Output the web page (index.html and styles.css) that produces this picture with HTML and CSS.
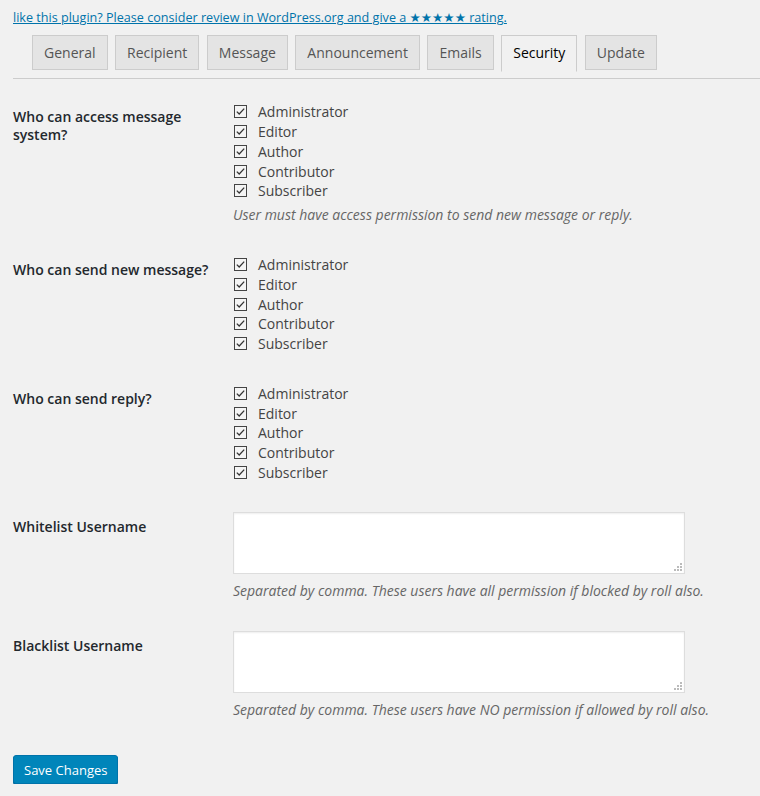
FILE: index.html
```html
<!DOCTYPE html>
<html>
<head>
<meta charset="utf-8">
<link rel="stylesheet" href="styles.css">
</head>
<body>
<div class="wrap">
  <p class="review"><a href="#">like this plugin? Please consider review in WordPress.org and give a ★★★★★ rating.</a></p>
  <div class="tabs">
    <a class="tab" href="#">General</a>
    <a class="tab" href="#">Recipient</a>
    <a class="tab" href="#">Message</a>
    <a class="tab" href="#">Announcement</a>
    <a class="tab" href="#">Emails</a>
    <a class="tab active" href="#">Security</a>
    <a class="tab" href="#">Update</a>
  </div>
  <table class="form-table">
    <tr>
      <th>Who can access message system?</th>
      <td>
        <div class="checks">
          <label class="check"><svg class="cb" width="13" height="13" viewBox="0 0 13 13"><rect x="0.5" y="0.5" width="12" height="12"/><path d="M2.8 6.6 L5.2 9 L10.2 3.6"/></svg>Administrator</label>
          <label class="check"><svg class="cb" width="13" height="13" viewBox="0 0 13 13"><rect x="0.5" y="0.5" width="12" height="12"/><path d="M2.8 6.6 L5.2 9 L10.2 3.6"/></svg>Editor</label>
          <label class="check"><svg class="cb" width="13" height="13" viewBox="0 0 13 13"><rect x="0.5" y="0.5" width="12" height="12"/><path d="M2.8 6.6 L5.2 9 L10.2 3.6"/></svg>Author</label>
          <label class="check"><svg class="cb" width="13" height="13" viewBox="0 0 13 13"><rect x="0.5" y="0.5" width="12" height="12"/><path d="M2.8 6.6 L5.2 9 L10.2 3.6"/></svg>Contributor</label>
          <label class="check"><svg class="cb" width="13" height="13" viewBox="0 0 13 13"><rect x="0.5" y="0.5" width="12" height="12"/><path d="M2.8 6.6 L5.2 9 L10.2 3.6"/></svg>Subscriber</label>
        </div>
        <p class="description">User must have access permission to send new message or reply.</p>
      </td>
    </tr>
    <tr>
      <th>Who can send new message?</th>
      <td>
        <div class="checks">
          <label class="check"><svg class="cb" width="13" height="13" viewBox="0 0 13 13"><rect x="0.5" y="0.5" width="12" height="12"/><path d="M2.8 6.6 L5.2 9 L10.2 3.6"/></svg>Administrator</label>
          <label class="check"><svg class="cb" width="13" height="13" viewBox="0 0 13 13"><rect x="0.5" y="0.5" width="12" height="12"/><path d="M2.8 6.6 L5.2 9 L10.2 3.6"/></svg>Editor</label>
          <label class="check"><svg class="cb" width="13" height="13" viewBox="0 0 13 13"><rect x="0.5" y="0.5" width="12" height="12"/><path d="M2.8 6.6 L5.2 9 L10.2 3.6"/></svg>Author</label>
          <label class="check"><svg class="cb" width="13" height="13" viewBox="0 0 13 13"><rect x="0.5" y="0.5" width="12" height="12"/><path d="M2.8 6.6 L5.2 9 L10.2 3.6"/></svg>Contributor</label>
          <label class="check"><svg class="cb" width="13" height="13" viewBox="0 0 13 13"><rect x="0.5" y="0.5" width="12" height="12"/><path d="M2.8 6.6 L5.2 9 L10.2 3.6"/></svg>Subscriber</label>
        </div>
      </td>
    </tr>
    <tr>
      <th>Who can send reply?</th>
      <td>
        <div class="checks">
          <label class="check"><svg class="cb" width="13" height="13" viewBox="0 0 13 13"><rect x="0.5" y="0.5" width="12" height="12"/><path d="M2.8 6.6 L5.2 9 L10.2 3.6"/></svg>Administrator</label>
          <label class="check"><svg class="cb" width="13" height="13" viewBox="0 0 13 13"><rect x="0.5" y="0.5" width="12" height="12"/><path d="M2.8 6.6 L5.2 9 L10.2 3.6"/></svg>Editor</label>
          <label class="check"><svg class="cb" width="13" height="13" viewBox="0 0 13 13"><rect x="0.5" y="0.5" width="12" height="12"/><path d="M2.8 6.6 L5.2 9 L10.2 3.6"/></svg>Author</label>
          <label class="check"><svg class="cb" width="13" height="13" viewBox="0 0 13 13"><rect x="0.5" y="0.5" width="12" height="12"/><path d="M2.8 6.6 L5.2 9 L10.2 3.6"/></svg>Contributor</label>
          <label class="check"><svg class="cb" width="13" height="13" viewBox="0 0 13 13"><rect x="0.5" y="0.5" width="12" height="12"/><path d="M2.8 6.6 L5.2 9 L10.2 3.6"/></svg>Subscriber</label>
        </div>
      </td>
    </tr>
    <tr>
      <th>Whitelist Username</th>
      <td>
        <div class="ta-wrap">
          <textarea class="ta"></textarea>
          <svg class="grip" width="8" height="8" viewBox="0 0 8 8"><rect x="6" y="0" width="2" height="2"/><rect x="3" y="3" width="2" height="2"/><rect x="6" y="3" width="2" height="2"/><rect x="0" y="6" width="2" height="2"/><rect x="3" y="6" width="2" height="2"/><rect x="6" y="6" width="2" height="2"/></svg>
        </div>
        <p class="description">Separated by comma. These users have all permission if blocked by roll also.</p>
      </td>
    </tr>
    <tr>
      <th>Blacklist Username</th>
      <td>
        <div class="ta-wrap">
          <textarea class="ta"></textarea>
          <svg class="grip" width="8" height="8" viewBox="0 0 8 8"><rect x="6" y="0" width="2" height="2"/><rect x="3" y="3" width="2" height="2"/><rect x="6" y="3" width="2" height="2"/><rect x="0" y="6" width="2" height="2"/><rect x="3" y="6" width="2" height="2"/><rect x="6" y="6" width="2" height="2"/></svg>
        </div>
        <p class="description">Separated by comma. These users have NO permission if allowed by roll also.</p>
      </td>
    </tr>
  </table>
  <p class="submit"><button class="button-primary" type="button">Save Changes</button></p>
</div>
</body>
</html>
```

FILE: styles.css
```css
html, body {
  margin: 0;
  padding: 0;
  background: #f1f1f1;
}
body {
  font-family: "Open Sans", "Noto Sans", "DejaVu Sans", sans-serif;
  color: #23282d;
  font-size: 13px;
}
.wrap {
  padding-left: 13px;
}
.review {
  margin: 0;
  padding-top: 9px;
  line-height: 18px;
  font-size: 12.6px;
}
.review a {
  color: #0073aa;
  text-decoration: underline;
}
.tabs {
  display: flex;
  padding: 8px 0 0 12px;
  border-bottom: 1px solid #ccc;
  height: 52px;
  box-sizing: border-box;
}
.tab {
  display: block;
  margin-left: 7.5px;
  height: 35px;
  box-sizing: border-box;
  padding: 0 11px;
  line-height: 33px;
  font-size: 14px;
  color: #555;
  background: #e4e4e4;
  border: 1px solid #ccc;
  text-decoration: none;
}
.tab:first-child {
  margin-left: 7px;
}
.tab.active {
  background: #f1f1f1;
  color: #000;
  height: 37px;
  border-bottom-color: #f1f1f1;
}
.form-table {
  border-collapse: collapse;
  margin-top: 8px;
}
.form-table th {
  width: 210px;
  padding: 21px 10px 20px 0;
  text-align: left;
  vertical-align: top;
  font-weight: 600;
  font-size: 14px;
  line-height: 18px;
  color: #23282d;
}
.form-table td {
  padding: 15px 10px 15px 0;
  vertical-align: top;
}
.checks {
  display: flex;
  flex-direction: column;
}
.check {
  display: flex;
  align-items: center;
  height: 19.75px;
  font-size: 14px;
  color: #444;
}
.cb {
  margin: 0 11px 0 1px;
  flex: none;
}
.cb rect {
  fill: #f4f4f4;
  stroke: #444;
  stroke-width: 1;
}
.cb path {
  fill: none;
  stroke: #333;
  stroke-width: 1.3;
}
.description {
  margin: 4px 0 0;
  font-size: 14px;
  line-height: 20px;
  font-style: italic;
  color: #666;
}
.ta-wrap {
  position: relative;
  width: 452px;
  height: 62px;
}
.ta {
  display: block;
  width: 452px;
  height: 62px;
  box-sizing: border-box;
  margin: 0;
  border: 1px solid #ddd;
  background: #fff;
  box-shadow: inset 0 1px 2px rgba(0, 0, 0, 0.07);
  resize: none;
  font-family: inherit;
}
.ta-wrap + .description {
  margin-top: 7px;
}
.grip {
  position: absolute;
  right: 3px;
  bottom: 3px;
}
.grip rect {
  fill: #bbb;
}
.submit {
  margin: 20px 0 0;
}
.button-primary {
  display: block;
  height: 29px;
  padding: 0 10px;
  font-family: inherit;
  font-size: 13px;
  color: #fff;
  background: #0085ba;
  border: 1px solid #0073aa;
  border-radius: 3px;
  box-shadow: 0 1px 0 #006799;
  cursor: pointer;
}
```
